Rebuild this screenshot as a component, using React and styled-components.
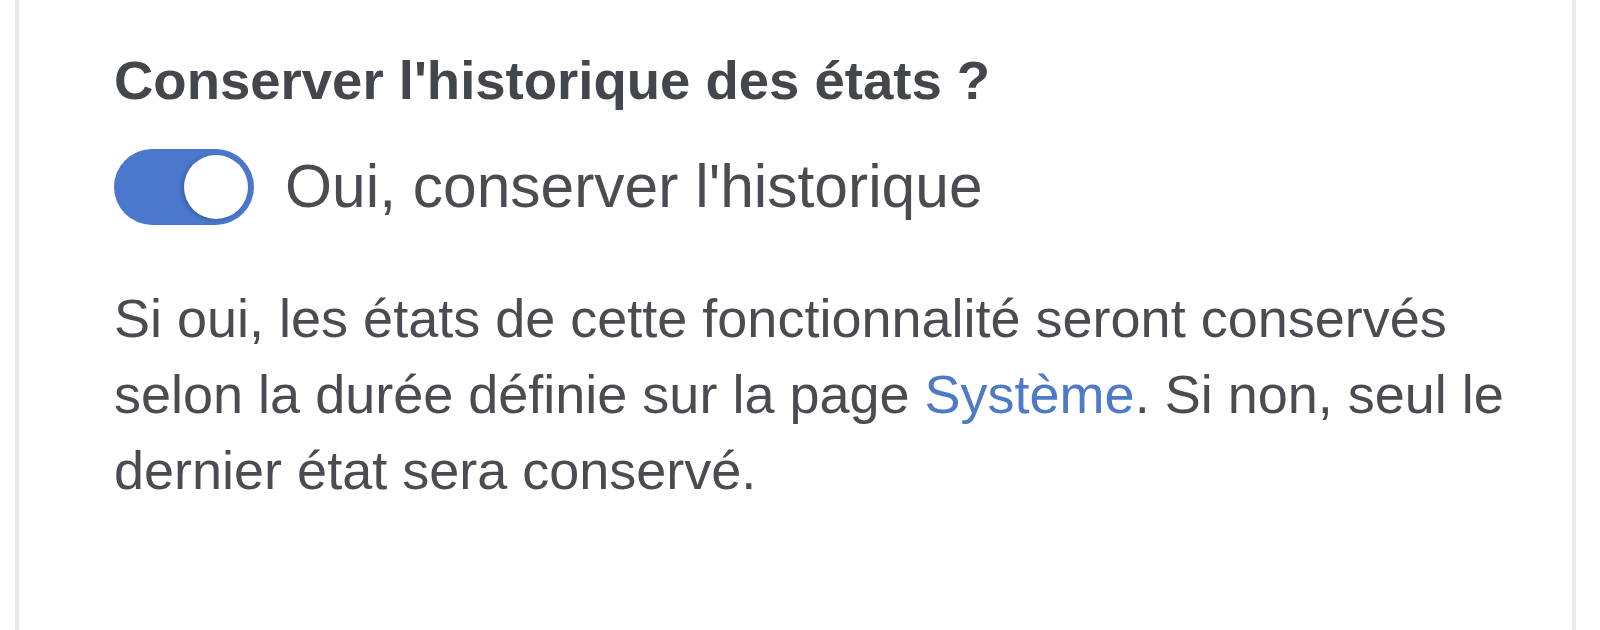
import React from 'react';
import styled, { createGlobalStyle } from 'styled-components';

const GlobalStyle = createGlobalStyle`
    html, body {
        margin: 0;
        padding: 0;
        background: #ffffff;
    }
    body {
        font-family: "Liberation Sans", Arial, Helvetica, sans-serif;
        -webkit-font-smoothing: antialiased;
    }
`

const Page = styled.div`
    width: 100%;
    height: 630px;
    overflow: hidden;
    padding: 0 24px 0 15px;
    box-sizing: border-box;
`

const Card = styled.div`
    min-height: 630px;
    box-sizing: border-box;
    border-left: 4px solid #e8e9ec;
    border-right: 4px solid #e8e9ec;
    padding: 54px 60px 0 95px;
    background: #ffffff;
`

const Title = styled.h3`
    margin: 0;
    font-size: 54.5px;
    line-height: 1;
    font-weight: 700;
    color: #43464b;
`

const SwitchRow = styled.label`
    display: flex;
    align-items: center;
    margin-top: 40px;
    cursor: pointer;
`

const Track = styled.span`
    position: relative;
    display: inline-block;
    flex-shrink: 0;
    width: 140px;
    height: 76px;
    border-radius: 38px;
    background: ${p => (p.$on ? '#4b78cc' : '#d5d7db')};
`

const Knob = styled.span`
    position: absolute;
    top: 6px;
    left: ${p => (p.$on ? '70px' : '6px')};
    width: 64px;
    height: 64px;
    border-radius: 50%;
    background: #ffffff;
    box-shadow: -2px 1px 4px rgba(20, 40, 90, 0.35);
`

const SwitchLabel = styled.span`
    margin-left: 31px;
    font-size: 60.5px;
    line-height: 1;
    color: #4a4c51;
`

const Help = styled.p`
    margin: 55px 0 0;
    font-size: 54px;
    line-height: 76px;
    color: #4a4c51;
`

const Link = styled.a`
    color: #4f7bc6;
    text-decoration: none;
`

function App() {
    const on = true;

    return (
        <Page>
            <GlobalStyle />
            <Card>
                <Title>Conserver l'historique des états ?</Title>
                <SwitchRow>
                    <Track $on={on}>
                        <Knob $on={on} />
                    </Track>
                    <SwitchLabel>Oui, conserver l'historique</SwitchLabel>
                </SwitchRow>
                <Help>
                    Si oui, les états de cette fonctionnalité seront conservés selon la durée
                    définie sur la page <Link href="#">Système</Link>. Si non, seul le dernier
                    état sera conservé.
                </Help>
            </Card>
        </Page>
    )
}

export default App;
